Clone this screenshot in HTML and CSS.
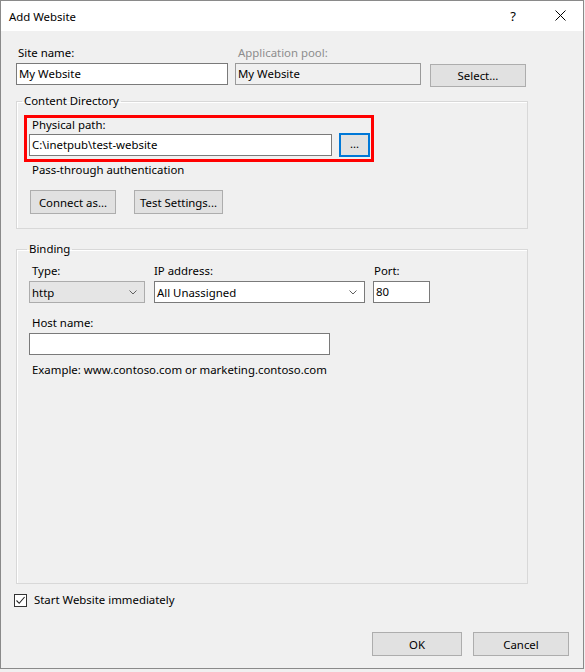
FILE: index.html
```html
<!DOCTYPE html>
<html lang="en">
<head>
<meta charset="utf-8">
<title>Add Website</title>
<link rel="stylesheet" href="styles.css">
</head>
<body>
<div class="window">
  <div class="titlebar">
    <span class="title">Add Website</span>
    <span class="help">?</span>
    <span class="close">
      <svg width="11" height="11" viewBox="0 0 11 11"><path d="M0.5 0.5 L10.5 10.5 M10.5 0.5 L0.5 10.5" stroke="#000" stroke-width="1" fill="none"/></svg>
    </span>
  </div>

  <div class="content">
    <div class="top-row">
      <div class="field site">
        <div class="label site-label">Site name:</div>
        <div class="textbox">My Website</div>
      </div>
      <div class="field pool">
        <div class="label disabled">Application pool:</div>
        <div class="textbox readonly">My Website</div>
      </div>
      <div class="btn select">Select...</div>
    </div>

    <fieldset class="group directory">
      <legend>Content Directory</legend>
      <div class="highlight">
        <div class="label path-label">Physical path:</div>
        <div class="path-row">
          <div class="textbox path">C:\inetpub\test-website</div>
          <div class="btn browse">...</div>
        </div>
      </div>
      <div class="note">Pass-through authentication</div>
      <div class="btn-row">
        <div class="btn connect">Connect as...</div>
        <div class="btn test">Test Settings...</div>
      </div>
    </fieldset>

    <fieldset class="group binding">
      <legend>Binding</legend>
      <div class="binding-row">
        <div class="field type">
          <div class="label inset">Type:</div>
          <div class="combo gray"><span>http</span><svg class="chev" width="8" height="5" viewBox="0 0 8 5"><path d="M0.5 0.5 L4 4 L7.5 0.5" stroke="#606060" fill="none"/></svg></div>
        </div>
        <div class="field ip">
          <div class="label">IP address:</div>
          <div class="combo"><span>All Unassigned</span><svg class="chev" width="8" height="5" viewBox="0 0 8 5"><path d="M0.5 0.5 L4 4 L7.5 0.5" stroke="#606060" fill="none"/></svg></div>
        </div>
        <div class="field port">
          <div class="label port-label">Port:</div>
          <div class="textbox">80</div>
        </div>
      </div>
      <div class="label inset host-label">Host name:</div>
      <div class="textbox host"></div>
      <div class="label inset example">Example: www.contoso.com or marketing.contoso.com</div>
    </fieldset>

    <div class="check-row">
      <span class="checkbox">
        <svg width="11" height="11" viewBox="0 0 11 11"><path d="M1.5 5.5 L4.2 8.3 L9.6 2" stroke="#222" stroke-width="1.1" fill="none"/></svg>
      </span>
      <span class="check-label">Start Website immediately</span>
    </div>

    <div class="footer">
      <div class="btn ok">OK</div>
      <div class="btn cancel">Cancel</div>
    </div>
  </div>
</div>
</body>
</html>
```

FILE: styles.css
```css
* {
  box-sizing: border-box;
}

html, body {
  margin: 0;
  padding: 0;
  background: #f0f0f0;
}

body {
  font-family: "Segoe UI", "Noto Sans", "Open Sans", sans-serif;
  font-size: 11.4px;
  color: #000;
}

.window {
  width: 584px;
  height: 669px;
  border: 1px solid #8a8a8a;
  background: #f0f0f0;
  display: flex;
  flex-direction: column;
}

/* title bar */
.titlebar {
  height: 30px;
  background: #fff;
  display: flex;
  align-items: center;
  padding-left: 8px;
}

.title {
  flex: 1;
  line-height: 30px;
  margin-top: 1px;
}

.help {
  font-size: 13px;
  width: 20px;
  text-align: center;
  margin-right: 32px;
  margin-top: -1px;
}

.close {
  display: flex;
  margin-right: 17px;
  margin-top: -1px;
}

/* dialog body */
.content {
  padding: 14px 0 0 15px;
  display: flex;
  flex-direction: column;
}

.label {
  line-height: 16px;
  white-space: nowrap;
}

.label.site-label {
  padding-left: 2px;
}

.label.disabled {
  color: #8d8d8d;
  padding-left: 3px;
}

.label.inset {
  padding-left: 3px;
}

.textbox {
  height: 22px;
  border: 1px solid #7a7a7a;
  background: #fff;
  line-height: 20px;
  padding-left: 2px;
  white-space: nowrap;
}

.textbox.readonly {
  background: #f0f0f0;
  border-color: #9a9a9a;
}

.btn {
  height: 24px;
  border: 1px solid #adadad;
  background: #e1e1e1;
  display: flex;
  align-items: center;
  justify-content: center;
  white-space: nowrap;
}

/* first row */
.top-row {
  display: flex;
  align-items: flex-end;
}

.field .label {
  margin-bottom: 2px;
}

.site {
  width: 212px;
}

.pool {
  width: 186px;
  margin-left: 7px;
}

.btn.select {
  width: 96px;
  height: 23px;
  margin-left: 9px;
  margin-bottom: -2px;
}

/* group boxes */
.group {
  margin: 0;
  border: 1px solid #d8d8d8;
  box-shadow: inset 1px 1px 0 #fff;
  width: 512px;
}

.group legend {
  line-height: 16px;
  padding: 0 2px;
  margin-left: -2px;
}

.directory {
  margin-top: 8px;
  padding: 6px 0 14px 7px;
}

.highlight {
  width: 350px;
  height: 47px;
  border: 3px solid #ff0000;
  padding: 0 0 1px 2px;
}

.path-label {
  line-height: 13px;
  padding-left: 3px;
}

.path-row {
  display: flex;
  margin-top: 2px;
}

.textbox.path {
  width: 303px;
  margin-top: 1px;
}

.btn.browse {
  width: 31px;
  height: 24px;
  margin-left: 7px;
  border: 2px solid #0078d7;
  padding-bottom: 3px;
}

.note {
  line-height: 16px;
  padding-left: 8px;
}

.btn-row {
  display: flex;
  margin-top: 12px;
  padding-left: 6px;
}

.btn.connect {
  width: 86px;
}

.btn.test {
  width: 89px;
  margin-left: 18px;
}

/* binding group */
.binding {
  margin-top: 12px;
  height: 343px;
  padding: 6px 0 0 12px;
}

.binding-row {
  display: flex;
}

.type {
  width: 116px;
}

.ip {
  width: 211px;
  margin-left: 9px;
}

.port {
  width: 57px;
  margin-left: 8px;
}

.port-label {
  padding-left: 1px;
}

.combo {
  height: 22px;
  border: 1px solid #7a7a7a;
  background: #fff;
  display: flex;
  align-items: center;
  justify-content: space-between;
  padding: 0 7px 0 2px;
}

.combo.gray {
  background: #e5e5e5;
  border-color: #acacac;
}

.combo .chev {
  display: block;
}

.host-label {
  margin-top: 12px;
  margin-bottom: 2px;
}

.textbox.host {
  width: 301px;
}

.example {
  margin-top: 7px;
}

/* checkbox */
.check-row {
  display: flex;
  align-items: center;
  margin-top: 8px;
  line-height: 16px;
}

.checkbox {
  width: 13px;
  height: 13px;
  border: 1px solid #333;
  background: #fff;
  margin-left: -2px;
  display: flex;
  align-items: center;
  justify-content: center;
}

.check-label {
  margin-left: 7px;
}

/* dialog buttons */
.footer {
  display: flex;
  justify-content: flex-end;
  margin-top: 24px;
  padding-right: 14px;
}

.btn.ok {
  width: 90px;
}

.btn.cancel {
  width: 96px;
  margin-left: 11px;
}
```
